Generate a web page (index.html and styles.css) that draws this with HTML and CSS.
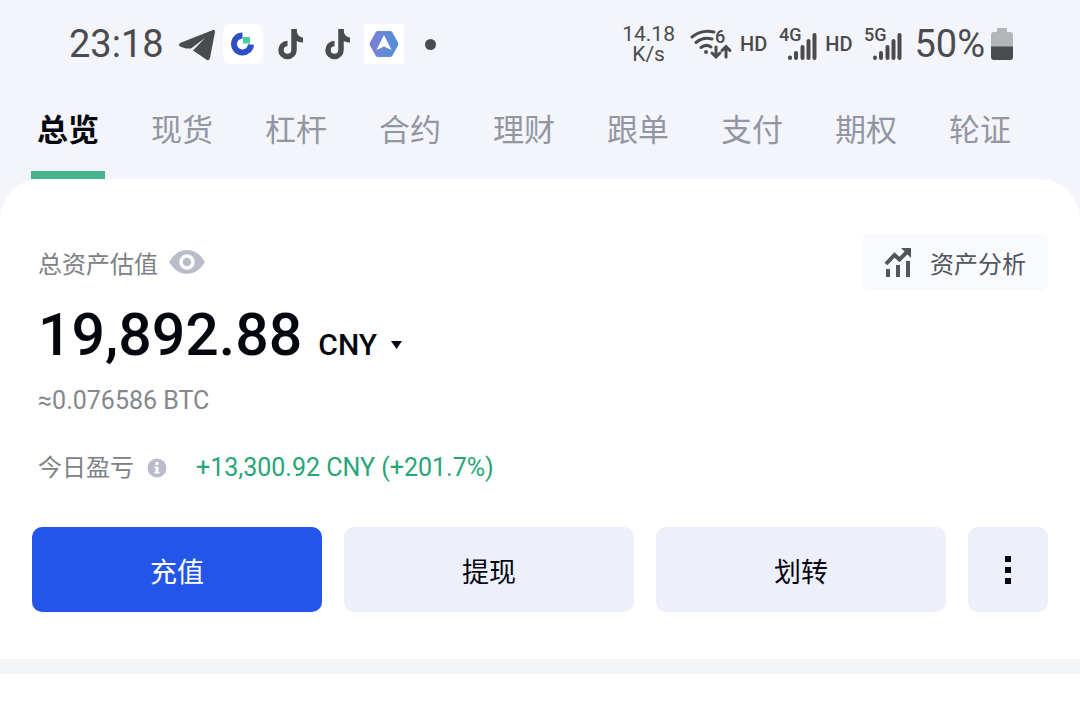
FILE: index.html
```html
<!DOCTYPE html>
<html lang="zh-CN">
<head>
  <meta charset="UTF-8" />
  <meta name="viewport" content="width=device-width, initial-scale=1.0"/>
  <title>总览</title>
  <link rel="stylesheet" href="styles.css">
</head>
<body>

  <div class="page">
    <!-- Status bar -->
    <header class="status-bar">
      <div class="status-left">
        <span class="clock">23:18</span>
        <svg class="telegram" width="38" height="34" viewBox="0 0 38 34">
          <path d="M35 3L2 16Q0 18 2 19.500L8 21.500H13L27 11L15 23.500L29 33Q31 34 32 31L37 5Q37 2 35 3Z" fill="#4a4b4f"/>
        </svg>
        <span class="app-tile round">
          <svg width="24" height="24" viewBox="0 0 24 24">
            <path d="M11.500 3.500A8.500 8.500 0 1 0 20 12.500" fill="none" stroke="#2f50c4" stroke-width="6"/>
            <path d="M12 5h7v6.500h-7z" fill="#45cf9b"/>
          </svg>
        </span>
        <svg class="note" width="26" height="32" viewBox="0 0 26 32">
          <path d="M16 1V22A6.500 6.500 0 1 1 9.500 15.500" fill="none" stroke="#4a4b4f" stroke-width="5.500"/>
          <path d="M16 1H18.500C18.500 6 21 9 25 9.500V14.500C21 14.500 18 13 16 11Z" fill="#4a4b4f"/>
        </svg>
        <svg class="note" width="26" height="32" viewBox="0 0 26 32">
          <path d="M16 1V22A6.500 6.500 0 1 1 9.500 15.500" fill="none" stroke="#4a4b4f" stroke-width="5.500"/>
          <path d="M16 1H18.500C18.500 6 21 9 25 9.500V14.500C21 14.500 18 13 16 11Z" fill="#4a4b4f"/>
        </svg>
        <span class="app-tile">
          <svg width="30" height="28" viewBox="0 0 30 28">
            <defs>
              <linearGradient id="hex" x1="0" y1="0" x2="1" y2="0">
                <stop offset="0" stop-color="#7d7fd6"/>
                <stop offset="1" stop-color="#4f90d8"/>
              </linearGradient>
            </defs>
            <path d="M9 1H21Q22.500 1 23.300 2.300L29 12.500Q29.700 14 29 15.500L23.300 25.700Q22.500 27 21 27H9Q7.500 27 6.700 25.700L1 15.500Q.3 14 1 12.500L6.700 2.300Q7.500 1 9 1Z" fill="url(#hex)"/>
            <path d="M15 5L22.500 20L15 16.500L7.500 20Z" fill="#fff"/>
          </svg>
        </span>
        <span class="dot"></span>
      </div>

      <div class="status-right">
        <span class="speed">14.18<br>K/s</span>
        <svg width="42" height="32" viewBox="0 0 42 32">
          <g fill="none" stroke="#4a4b4f" stroke-width="3" stroke-linecap="round">
            <path d="M2 9Q12 1 24 4"/>
            <path d="M6 14.500Q13 8.500 22 11"/>
            <path d="M11 19.500Q16 15.500 21 19"/>
            <path d="M26 19V28M22 25L26 29L30 25"/>
            <path d="M36 29V19M32 22.500L36 18.500L40 22.500"/>
          </g>
          <circle cx="16" cy="24" r="2" fill="#4a4b4f"/>
          <text class="net-text" x="25" y="15">6</text>
        </svg>
        <span class="hd">HD</span>
        <svg width="38" height="34" viewBox="0 0 38 34">
          <text class="net-text" x="0" y="14">4G</text>
          <path d="M11 30.500V31M17 26V31M23.500 20V31M29.500 14V31M35.500 8V31" stroke="#4a4b4f" stroke-width="4" stroke-linecap="round"/>
        </svg>
        <span class="hd">HD</span>
        <svg width="38" height="34" viewBox="0 0 38 34">
          <text class="net-text" x="0" y="14">5G</text>
          <path d="M11 30.500V31M17 26V31M23.500 20V31M29.500 14V31M35.500 8V31" stroke="#4a4b4f" stroke-width="4" stroke-linecap="round"/>
        </svg>
        <span class="battery-text">50%</span>
        <svg width="22" height="32" viewBox="0 0 22 32">
          <path d="M6 4V1Q6 0 7 0H15Q16 0 16 1V4H19Q22 4 22 7V19H0V7Q0 4 3 4Z" fill="#b5b6b9"/>
          <path d="M0 18.500H22V29Q22 32 19 32H3Q0 32 0 29Z" fill="#4a4b4f"/>
        </svg>
      </div>
    </header>

    <!-- Account tabs -->
    <nav class="tabs">
      <a class="tab active" href="#">总览</a>
      <a class="tab" href="#">现货</a>
      <a class="tab" href="#">杠杆</a>
      <a class="tab" href="#">合约</a>
      <a class="tab" href="#">理财</a>
      <a class="tab" href="#">跟单</a>
      <a class="tab" href="#">支付</a>
      <a class="tab" href="#">期权</a>
      <a class="tab" href="#">轮证</a>
    </nav>

    <main class="card">
      <div class="card-head">
        <div class="label">
          <span>总资产估值</span>
          <svg width="38" height="24" viewBox="0 0 38 24">
            <path d="M1 12Q8 0 19 0T37 12Q30 24 19 24T1 12Z" fill="#b9bdca"/>
            <circle cx="19" cy="12" r="6" fill="none" stroke="#fff" stroke-width="3.500"/>
          </svg>
        </div>
        <button class="analysis" type="button">
          <svg width="28" height="30" viewBox="0 0 28 30">
            <g fill="#51555d">
              <path d="M2 22h4v8H2zM12 18h4v12h-4zM22 14h4v16h-4z"/>
              <path d="M17 1H27V11Z"/>
            </g>
            <path d="M2 17L10.500 8L15.500 12.500L24 4" fill="none" stroke="#51555d" stroke-width="4"/>
          </svg>
          <span>资产分析</span>
        </button>
      </div>

      <div class="balance">
        <span class="amount">19,892.88</span>
        <button class="currency" type="button">CNY
          <svg width="11" height="8" viewBox="0 0 11 8"><path d="M0 0H11L5.500 8Z" fill="#05070f"/></svg>
        </button>
      </div>
      <p class="btc">≈0.076586 BTC</p>

      <div class="pnl">
        <span>今日盈亏</span>
        <svg width="20" height="20" viewBox="0 0 20 20">
          <circle cx="10" cy="10" r="9.500" fill="#b9bdca"/>
          <path d="M8.500 4h3v3h-3zM7.500 8.500h4v5.500h1v1.500h-5V14h1v-4h-1z" fill="#fff"/>
        </svg>
        <span class="gain">+13,300.92 CNY (+201.7%)</span>
      </div>

      <div class="actions">
        <button class="btn primary" type="button">充值</button>
        <button class="btn" type="button">提现</button>
        <button class="btn" type="button">划转</button>
        <button class="btn more" type="button" aria-label="更多">
          <svg width="6" height="28" viewBox="0 0 6 28"><path d="M0 0h6v6H0zM0 11h6v6H0zM0 22h6v6H0z" fill="#05070f"/></svg>
        </button>
      </div>
    </main>
  </div>

  <div class="divider"></div>

</body>
</html>
```
FILE: styles.css
```css
* {
  margin: 0;
  padding: 0;
  box-sizing: border-box;
}

body {
  font-family: Roboto, "Noto Sans CJK SC", sans-serif;
  background: #fff;
  color: #05070f;
}

svg {
  display: block;
  flex-shrink: 0;
  overflow: visible;
}

button {
  font-family: inherit;
  border: none;
  cursor: pointer;
}

.page {
  background: #f4f5fa;
}

/* Status bar */
.status-bar {
  display: flex;
  justify-content: space-between;
  height: 88px;
  padding: 0 67px 0 69px;
  color: #4a4b4f;
}

.status-left,
.status-right {
  display: flex;
  align-items: center;
}

.clock,
.battery-text {
  font-size: 38px;
  line-height: 44px;
}

.telegram {
  margin: 0 7px 0 14px;
}

.app-tile {
  display: flex;
  align-items: center;
  justify-content: center;
  width: 40px;
  height: 40px;
  background: #fff;
}

.app-tile.round {
  border-radius: 8px;
}

.note {
  margin-left: 15px;
}

.note + .note {
  margin: 0 13px 0 21px;
}

.dot {
  width: 11px;
  height: 11px;
  margin-left: 21px;
  border-radius: 50%;
  background: #4a4b4f;
}

.speed {
  margin-right: 15px;
  font-size: 21px;
  line-height: 20px;
  text-align: center;
}

.hd {
  margin: 0 12px 0 8px;
  font-size: 20px;
  font-weight: 500;
}

.net-text {
  font-size: 18px;
  font-weight: 500;
  fill: #4a4b4f;
}

.battery-text {
  margin: 0 6px 0 12px;
}

/* Tabs */
.tabs {
  display: flex;
  gap: 40px;
  padding-left: 31px;
}

.tab {
  height: 91px;
  padding: 20px 6px 0;
  border-bottom: 8px solid transparent;
  font-size: 31px;
  line-height: 46px;
  color: #9296a3;
  text-decoration: none;
  white-space: nowrap;
}

.tab.active {
  border-color: #47b48c;
  color: #05070f;
  font-weight: 700;
}

/* Balance card */
.card {
  padding: 54px 32px 47px;
  border-radius: 40px 40px 0 0;
  background: #fff;
}

.card-head {
  display: flex;
  align-items: center;
  justify-content: space-between;
  padding-left: 6px;
}

.label {
  display: flex;
  align-items: center;
  gap: 10px;
  font-size: 24px;
  color: #7d8085;
}

.analysis {
  display: flex;
  align-items: center;
  gap: 18px;
  height: 58px;
  padding: 0 22px;
  border-radius: 8px;
  background: #f9fafd;
  font-size: 24px;
  color: #51555d;
}

.balance {
  display: flex;
  align-items: baseline;
  gap: 16px;
  margin-top: 14px;
  padding-left: 6px;
}

.amount {
  font-size: 59px;
  font-weight: 500;
  line-height: 60px;
}

.currency {
  display: flex;
  align-items: center;
  gap: 14px;
  background: none;
  font-size: 30px;
  font-weight: 500;
  line-height: 36px;
  color: #05070f;
}

.btc {
  margin-top: 21px;
  padding-left: 6px;
  font-size: 25px;
  line-height: 30px;
  color: #85878c;
}

.pnl {
  display: flex;
  align-items: center;
  gap: 13px;
  margin-top: 37px;
  padding-left: 6px;
  font-size: 24px;
  line-height: 30px;
  color: #7d8085;
}

.gain {
  margin-left: 16px;
  font-size: 25px;
  color: #27a577;
}

.actions {
  display: flex;
  gap: 22px;
  margin-top: 44px;
}

.btn {
  display: flex;
  flex: 1;
  align-items: center;
  justify-content: center;
  height: 85px;
  padding-top: 2px;
  border-radius: 10px;
  background: #edf0fb;
  font-size: 27px;
  color: #05070f;
}

.btn.primary {
  background: #2355e8;
  color: #fff;
}

.btn.more {
  flex: 0 0 80px;
  padding: 0;
}

.divider {
  height: 15px;
  background: #f4f5f7;
}
```
